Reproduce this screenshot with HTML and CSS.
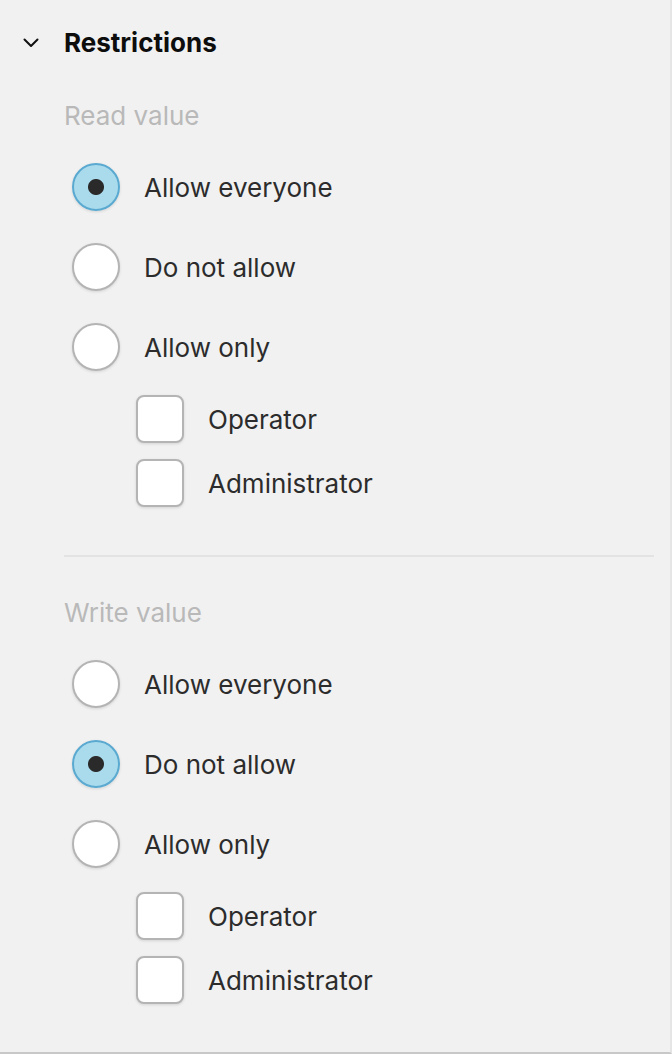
FILE: index.html
```html
<!DOCTYPE html>
<html lang="en">
<head>
    <meta charset="UTF-8">
    <meta name="viewport" content="width=device-width, initial-scale=1.0">
    <title>Restrictions</title>
    <link rel="stylesheet" href="styles.css">
</head>
<body>
    <div class="panel">
        <div class="section-header">
            <svg class="chevron" width="16" height="10" viewBox="0 0 16 10">
                <polyline points="1.5,1.5 8,8 14.5,1.5" fill="none" stroke="#111" stroke-width="2" stroke-linecap="round" stroke-linejoin="round"/>
            </svg>
            <h2>Restrictions</h2>
        </div>

        <div class="group">
            <div class="group-title">Read value</div>
            <div class="radio-list">
                <label class="option"><input type="radio" name="read" checked> Allow everyone</label>
                <label class="option"><input type="radio" name="read"> Do not allow</label>
                <label class="option"><input type="radio" name="read"> Allow only</label>
            </div>
            <div class="check-list">
                <label class="option"><input type="checkbox" name="read-operator"> Operator</label>
                <label class="option"><input type="checkbox" name="read-admin"> Administrator</label>
            </div>
        </div>

        <div class="divider"></div>

        <div class="group">
            <div class="group-title">Write value</div>
            <div class="radio-list">
                <label class="option"><input type="radio" name="write"> Allow everyone</label>
                <label class="option"><input type="radio" name="write" checked> Do not allow</label>
                <label class="option"><input type="radio" name="write"> Allow only</label>
            </div>
            <div class="check-list">
                <label class="option"><input type="checkbox" name="write-operator"> Operator</label>
                <label class="option"><input type="checkbox" name="write-admin"> Administrator</label>
            </div>
        </div>
    </div>
</body>
</html>
```

FILE: styles.css
```css
body {
    margin: 0;
    font-family: Inter, "Noto Sans", Arial, sans-serif;
    background: #f1f1f1;
}
.panel {
    box-sizing: border-box;
    width: 672px;
    height: 1054px;
    padding: 27px 16px 0 64px;
    background: #f1f1f1;
    border-right: 2px solid #e5e5e5;
    border-bottom: 2px solid #c8c8c8;
}
.section-header {
    display: flex;
    align-items: center;
    height: 32px;
    margin-left: -41px;
}
.chevron {
    margin-right: 25px;
}
.section-header h2 {
    margin: 0;
    font-size: 26px;
    line-height: 32px;
    font-weight: 700;
    color: #0d0d0d;
}
.group-title {
    margin-top: 41px;
    font-size: 26px;
    line-height: 32px;
    color: #b9b9b9;
}
.divider + .group .group-title {
    margin-top: 40px;
}
.radio-list {
    display: flex;
    flex-direction: column;
    gap: 32px;
    margin-top: 31px;
    margin-left: 8px;
}
.check-list {
    display: flex;
    flex-direction: column;
    gap: 16px;
    margin-top: 24px;
    margin-left: 72px;
}
.option {
    display: flex;
    align-items: center;
    gap: 24px;
    height: 48px;
    font-size: 26px;
    color: #2c2c2c;
}
.option input {
    appearance: none;
    -webkit-appearance: none;
    box-sizing: border-box;
    width: 48px;
    height: 48px;
    margin: 0;
    flex-shrink: 0;
    background: #fff;
    border: 2px solid #b4b4b4;
    box-shadow: 0 1px 3px rgba(0, 0, 0, 0.12);
}
.option input[type="radio"] {
    border-radius: 50%;
}
.option input[type="checkbox"] {
    border-radius: 8px;
}
.option input[type="radio"]:checked {
    background: radial-gradient(circle, #2a2a2a 0 7.5px, #a9dbec 8.5px);
    border-color: #5aa9d0;
}
.divider {
    height: 2px;
    margin-top: 48px;
    background: #e3e3e3;
}
```
